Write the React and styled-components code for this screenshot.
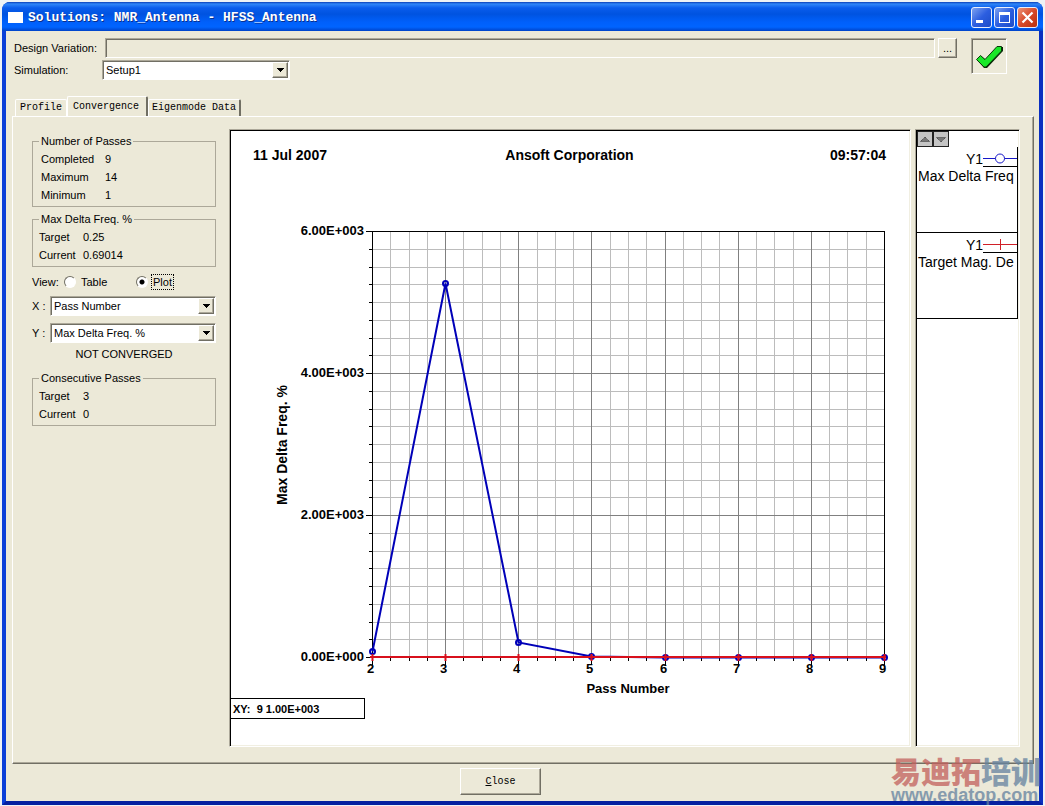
import React, { useState } from "react";
import styled, { createGlobalStyle, css } from "styled-components";

const FACE = "#ece9d8";
const SHADOW = "#716f64";
const SOFT = "#aca899";

const GlobalStyle = createGlobalStyle`
  *, *::before, *::after { box-sizing: border-box; }
  body {
    margin: 0;
    background: #eef2f5;
    color: #000;
    font: 11px/14px "Liberation Sans", Arial, sans-serif;
  }
  button, input, select { font: inherit; color: inherit; margin: 0; }
`;

const raised = css`
  border: 1px solid;
  border-color: #fff ${SHADOW} ${SHADOW} #fff;
  box-shadow: inset -1px -1px 0 ${SOFT};
  background: ${FACE};
`;

const sunken = css`
  padding: 1px;
  border: 1px solid;
  border-color: ${SOFT} #fff #fff ${SOFT};
  box-shadow: inset 1px 1px 0 ${SHADOW};
`;

const paneFrame = css`
  padding: 1px;
  border: 1px solid;
  border-color: ${SOFT} #fff #fff ${SOFT};
  box-shadow: inset 1px 1px 0 #000, inset -1px -1px 0 #f1efe2;
  background: #fff;
`;

const Desktop = styled.div`
  display: flex;
  min-height: 100vh;
  padding: 2px 2px 1px;
`;

const Window = styled.div`
  position: relative;
  flex: 1;
  min-width: 0;
  display: flex;
  flex-direction: column;
  border: 4px solid #0831d9;
  border-color: #0a3fd0 #0a2fc0 #0620a0 #0a3fd8;
  border-top: 0;
  border-radius: 8px 8px 0 0;
  background: #0058e6;
`;

const TitleBar = styled.header`
  display: flex;
  align-items: center;
  height: 29px;
  margin: 0 -4px;
  padding: 2px 5px 0 6px;
  border-radius: 8px 8px 0 0;
  background: linear-gradient(#0a3fb8 0, #2f86f8 2px, #0a5cec 6px, #0053e0 12px, #0060fb 20px, #0064ff 25px, #0043c8 29px);
`;

const AppIcon = styled.span`
  width: 15px;
  height: 11px;
  background: #fff;
  margin-right: 5px;
`;

const Title = styled.h1`
  flex: 1;
  margin: 0;
  color: #fff;
  font: bold 13px/18px "Liberation Mono", monospace;
  text-shadow: 1px 1px 0 #0a2f8c;
`;

const Captions = styled.div`
  display: flex;
  gap: 2px;
`;

const CaptionButton = styled.button`
  width: 21px;
  height: 21px;
  padding: 0;
  border: 1px solid #e8eefc;
  border-radius: 3px;
  background: ${(p) =>
    p.$danger
      ? "linear-gradient(135deg, #ec9478, #d8492a 50%, #b8300c)"
      : "linear-gradient(135deg, #7ea2f0, #2c5ee0 50%, #1c4cc8)"};

  svg { display: block; }
`;

const Client = styled.main`
  flex: 1;
  display: flex;
  flex-direction: column;
  background: ${FACE};
`;

const TopForm = styled.div`
  display: flex;
  align-items: flex-start;
  gap: 14px;
  padding: 7px 32px 0 8px;
`;

const FormRows = styled.div`
  flex: 1;
  display: flex;
  flex-direction: column;
  gap: 2px;
`;

const FormRow = styled.div`
  display: flex;
  align-items: center;
  height: 20px;

  label { width: 88px; }
`;

const VariationInput = styled.input`
  ${sunken}
  flex: 1;
  min-width: 0;
  height: 20px;
  margin: 0 3px;
  background: ${FACE};
`;

const BrowseButton = styled.button`
  ${raised}
  width: 19px;
  height: 20px;
  padding: 0;
`;

const ApplyButton = styled.button`
  ${sunken}
  width: 36px;
  height: 36px;
  background: ${FACE};

  svg { display: block; }
`;

const SelectBox = styled.span`
  ${sunken}
  display: grid;
  grid-template-columns: 1fr 16px;
  width: ${(p) => p.$width};
  height: 20px;
  background: #fff;
`;

const NativeSelect = styled.select`
  grid-area: 1 / 1 / 2 / 3;
  appearance: none;
  min-width: 0;
  border: 0;
  padding: 0 18px 0 2px;
  background: transparent;
  outline: 0;
`;

const DropArrow = styled.span`
  ${raised}
  grid-area: 1 / 2 / 2 / 3;
  display: grid;
  place-items: center;
  pointer-events: none;
`;

const TabList = styled.div`
  display: flex;
  align-items: flex-end;
  height: 20px;
  margin: 16px 0 0 9px;
`;

const Tab = styled.button`
  height: ${(p) => (p.$active ? 20 : 17)}px;
  padding: ${(p) => (p.$active ? "0 7px 0 5px" : p.$plain ? "0 4px" : "0 3px")};
  border: 1px solid #fff;
  border-right-color: ${(p) => (p.$plain ? "#fff" : SHADOW)};
  border-right-width: ${(p) => (p.$plain ? 1 : 2)}px;
  border-bottom: 0;
  border-radius: 2px 2px 0 0;
  background: ${FACE};
  font: 10px/14px "Liberation Mono", monospace;
  white-space: nowrap;
`;

const TabPage = styled.section`
  flex: 1;
  display: flex;
  margin: 0 5px 0 6px;
  padding: 12px 13px 16px 19px;
  border: 1px solid;
  border-color: #fff ${SHADOW} ${SHADOW} #fff;
  box-shadow: inset -1px -1px 0 ${SOFT};
`;

const Sidebar = styled.div`
  width: 184px;
  flex: none;
  margin-right: 13px;
  padding-top: 5px;
`;

const Group = styled.fieldset`
  margin: 0 0 ${(p) => p.$after || 0}px;
  padding: 2px 6px;
  border: 1px solid ${SOFT};

  legend { padding: 0 2px; height: 14px; }
  dl { margin: 0; }
`;

const Fact = styled.div`
  display: grid;
  grid-template-columns: ${(p) => (p.$wide ? 64 : 44)}px 1fr;
  align-items: center;
  height: 18px;
  padding-left: ${(p) => (p.$wide ? 2 : 0)}px;

  dd { margin: 0; }
`;

const ViewRow = styled.div`
  display: flex;
  align-items: center;
  height: 18px;
  margin-bottom: 4px;
`;

const ViewCaption = styled.span`
  width: 32px;
`;

const RadioLabel = styled.label`
  display: flex;
  align-items: center;
  gap: 4px;
  width: 72px;

  span { padding: 0 1px; outline: ${(p) => (p.$focus ? "1px dotted #000" : "0")}; }
`;

const Radio = styled.input`
  appearance: none;
  width: 12px;
  height: 12px;
  border: 1px solid;
  border-color: ${SHADOW} #fff #fff ${SHADOW};
  border-radius: 50%;
  background: #fff;

  &:checked { background: radial-gradient(circle, #000 2px, #fff 3px); }
`;

const AxisRow = styled.label`
  display: flex;
  align-items: center;
  height: 21px;
  margin-bottom: 6px;

  > span:first-child { width: 18px; }
`;

const Status = styled.p`
  margin: -2px 0 10px;
  text-align: center;
`;

const PlotPane = styled.div`
  ${paneFrame}
  flex: 1;
  min-width: 0;
  display: flex;
  flex-direction: column;
  align-items: flex-start;
  margin-right: 4px;
`;

const PlotHeader = styled.div`
  display: grid;
  grid-template-columns: 1fr auto 1fr;
  align-items: center;
  align-self: stretch;
  height: 40px;
  padding: 8px 23px 0 22px;
  font: bold 14px/16px "Liberation Sans", Arial, sans-serif;

  span:last-child { text-align: right; }
`;

const Chart = styled.svg`
  display: block;
  width: 100%;
  height: auto;
  font: bold 13px "Liberation Sans", Arial, sans-serif;
`;

const Readout = styled.output`
  width: 135px;
  height: 21px;
  padding: 3px 2px;
  border: 1px solid #000;
  margin-left: -1px;
  font-weight: bold;
  white-space: pre;
`;

const LegendPane = styled.aside`
  ${paneFrame}
  width: 105px;
  flex: none;
`;

const LegendScroll = styled.div`
  display: flex;
  height: 16px;
`;

const ScrollButton = styled.button`
  width: 16px;
  height: 16px;
  padding: 0;
  border: 1px solid #222;
  background: #c4c4c4;

  svg { display: block; }
`;

const LegendEntry = styled.div`
  height: 86px;
  border: solid #000;
  border-width: 0 1px 1px 0;
  font-size: 14px;
  line-height: 18px;
  white-space: nowrap;
  overflow: hidden;
`;

const LegendKey = styled.div`
  display: flex;
  justify-content: flex-end;
  height: 20px;
  line-height: 24px;

  svg { border-bottom: 1px solid #000; }
`;

const LegendName = styled.div`
  padding-left: 1px;
`;

const Footer = styled.footer`
  display: flex;
  justify-content: center;
  padding: 4px 44px 6px 0;
`;

const CloseButton = styled.button`
  ${raised}
  width: 81px;
  height: 27px;
  padding: 0;
  font: 10px/14px "Liberation Mono", monospace;
`;

const Watermark = styled.div`
  position: absolute;
  right: -5px;
  bottom: -3px;
  width: 153px;
  opacity: 0.75;
  color: #64829f;
  pointer-events: none;
  white-space: nowrap;
`;

const WatermarkName = styled.div`
  font: 900 30px/32px "Noto Sans CJK SC", sans-serif;

  em { font-style: normal; color: #c2605c; }
`;

const WatermarkSite = styled.div`
  font: bold 18px/18px "Liberation Sans", Arial, sans-serif;
`;

function Dropdown({ id, label, options, width }) {
  return (
    <SelectBox $width={width}>
      <NativeSelect id={id} aria-label={label}>
        {options.map((o) => <option key={o}>{o}</option>)}
      </NativeSelect>
      <DropArrow>
        <svg width="7" height="4" shapeRendering="crispEdges"><path d="M0 0h7v1h-1v1h-1v1h-1v1h-1v-1h-1v-1h-1v-1h-1z" /></svg>
      </DropArrow>
    </SelectBox>
  );
}

function FactGroup({ title, facts, wide, after }) {
  return (
    <Group $after={after}>
      <legend>{title}</legend>
      <dl>
        {facts.map(([name, value]) => (
          <Fact key={name} $wide={wide}><dt>{name}</dt><dd>{value}</dd></Fact>
        ))}
      </dl>
    </Group>
  );
}

const LEFT = 141, RIGHT = 653, TOP = 60, BOTTOM = 486;
const passX = (n) => Math.round(LEFT + ((n - 2) * (RIGHT - LEFT)) / 7) + 0.5;
const valueY = (v) => Math.round(BOTTOM - (v * (BOTTOM - TOP)) / 6000) + 0.5;
const deltas = [[2, 90], [3, 5270], [4, 205], [5, 8], [6, 3], [7, 2], [8, 1], [9, 1]];

function ConvergenceChart() {
  const columns = Array.from({ length: 29 }, (_, i) => i);
  const rows = Array.from({ length: 25 }, (_, i) => i);
  const passes = [2, 3, 4, 5, 6, 7, 8, 9];
  return (
    <Chart viewBox="0 0 678 527" role="img" aria-label="Max Delta Freq. % by Pass Number">
      <g shapeRendering="crispEdges" fill="none">
        {columns.filter((i) => i % 4).map((i) => (
          <path key={i} stroke="#bcbcbc" d={`M${passX(2 + i / 4)} ${TOP}V${BOTTOM}`} />
        ))}
        {rows.filter((i) => i % 8).map((i) => (
          <path key={i} stroke="#bcbcbc" d={`M${LEFT} ${valueY(i * 250)}H${RIGHT}`} />
        ))}
        {columns.filter((i) => i % 4 === 0).map((i) => (
          <path key={i} stroke="#808080" d={`M${passX(2 + i / 4)} ${TOP}V${BOTTOM}`} />
        ))}
        {rows.filter((i) => i % 8 === 0).map((i) => (
          <path key={i} stroke="#808080" d={`M${LEFT} ${valueY(i * 250)}H${RIGHT}`} />
        ))}
        <path stroke="#000" d={`M${LEFT + 0.5} ${BOTTOM}V${TOP + 0.5}H${RIGHT + 0.5}V${BOTTOM}`} />
        {columns.map((i) => (
          <path key={i} stroke="#000" d={`M${passX(2 + i / 4)} ${BOTTOM}v${i % 4 ? 4 : 8}`} />
        ))}
        {rows.map((i) => (
          <path key={i} stroke="#000" d={`M${LEFT} ${valueY(i * 250)}h${i % 8 ? -3 : -6}`} />
        ))}
      </g>
      <g stroke="#0000b8" strokeWidth="2" fill="none">
        <polyline points={deltas.map(([n, v]) => `${passX(n)},${valueY(v)}`).join(" ")} />
        {deltas.map(([n, v]) => <circle key={n} cx={passX(n)} cy={valueY(v)} r="2.5" />)}
      </g>
      <g stroke="#d8101c" strokeWidth="2">
        <path d={`M${LEFT - 2} ${BOTTOM}H${RIGHT + 2}`} />
        {passes.map((n) => <path key={n} d={`M${passX(n)} ${BOTTOM - 3}v7`} />)}
      </g>
      {[0, 2000, 4000, 6000].map((v) => (
        <text key={v} x="133" y={valueY(v) + 3} textAnchor="end">{`${(v / 1000).toFixed(2)}E+00${v ? 3 : 0}`}</text>
      ))}
      {passes.map((n) => (
        <text key={n} x={passX(n) - 2} y="502" textAnchor="middle">{n}</text>
      ))}
      <text x="397" y="522" textAnchor="middle">Pass Number</text>
      <text transform="translate(56 274) rotate(-90)" textAnchor="middle" fontSize="14">Max Delta Freq. %</text>
    </Chart>
  );
}

export default function App() {
  const [view, setView] = useState("Plot");
  return (
    <Desktop>
      <GlobalStyle />
      <Window>
        <TitleBar>
          <AppIcon />
          <Title>Solutions: NMR_Antenna - HFSS_Antenna</Title>
          <Captions>
            <CaptionButton aria-label="Minimize">
              <svg width="19" height="19"><path fill="#fff" d="M4 12h7v3H4z" /></svg>
            </CaptionButton>
            <CaptionButton aria-label="Maximize">
              <svg width="19" height="19"><path fill="#fff" fillRule="evenodd" d="M4 4h11v11H4zM5 7v7h9V7z" /></svg>
            </CaptionButton>
            <CaptionButton aria-label="Close window" $danger>
              <svg width="19" height="19"><path stroke="#fff" strokeWidth="2.2" d="M4.5 4.5l10 10M14.5 4.5l-10 10" /></svg>
            </CaptionButton>
          </Captions>
        </TitleBar>
        <Client>
          <TopForm>
            <FormRows>
              <FormRow>
                <label htmlFor="variation">Design Variation:</label>
                <VariationInput id="variation" readOnly />
                <BrowseButton aria-label="Browse variations">...</BrowseButton>
              </FormRow>
              <FormRow>
                <label htmlFor="simulation">Simulation:</label>
                <Dropdown id="simulation" options={["Setup1"]} width="188px" />
              </FormRow>
            </FormRows>
            <ApplyButton aria-label="Apply">
              <svg width="32" height="32">
                <path fill="#082808" d="M4 20l4-4 5 4L25 7h5v4L14 28h-3z" />
                <path fill="#18e828" stroke="#083808" d="M3.500 19.500l4-4 4.500 4L24 6.500h4.500v4.500L13 27h-2z" />
              </svg>
            </ApplyButton>
          </TopForm>
          <TabList role="tablist">
            <Tab role="tab" $plain>Profile</Tab>
            <Tab role="tab" aria-selected="true" $active>Convergence</Tab>
            <Tab role="tab">Eigenmode Data</Tab>
          </TabList>
          <TabPage>
            <Sidebar>
              <FactGroup title="Number of Passes" wide after={5} facts={[["Completed", "9"], ["Maximum", "14"], ["Minimum", "1"]]} />
              <FactGroup title="Max Delta Freq. %" after={6} facts={[["Target", "0.25"], ["Current", "0.69014"]]} />
              <ViewRow role="radiogroup" aria-label="View">
                <ViewCaption>View:</ViewCaption>
                {["Table", "Plot"].map((name) => (
                  <RadioLabel key={name} $focus={view === name}>
                    <Radio type="radio" name="view" checked={view === name} onChange={() => setView(name)} />
                    <span>{name}</span>
                  </RadioLabel>
                ))}
              </ViewRow>
              <AxisRow><span>X :</span><Dropdown label="X axis" options={["Pass Number"]} width="166px" /></AxisRow>
              <AxisRow><span>Y :</span><Dropdown label="Y axis" options={["Max Delta Freq. %"]} width="166px" /></AxisRow>
              <Status>NOT CONVERGED</Status>
              <FactGroup title="Consecutive Passes" facts={[["Target", "3"], ["Current", "0"]]} />
            </Sidebar>
            <PlotPane>
              <PlotHeader>
                <span>11 Jul 2007</span>
                <span>Ansoft Corporation</span>
                <span>09:57:04</span>
              </PlotHeader>
              <ConvergenceChart />
              <Readout>{"XY:  9 1.00E+003"}</Readout>
            </PlotPane>
            <LegendPane>
              <LegendScroll>
                <ScrollButton aria-label="Scroll up">
                  <svg width="14" height="14"><path fill="#777" stroke="#333" strokeDasharray="1 1" d="M2.500 9.500h9L7 5z" /></svg>
                </ScrollButton>
                <ScrollButton aria-label="Scroll down">
                  <svg width="14" height="14"><path fill="#777" stroke="#333" strokeDasharray="1 1" d="M2.500 5.500h9L7 10z" /></svg>
                </ScrollButton>
              </LegendScroll>
              <LegendEntry>
                <LegendKey>
                  Y1
                  <svg width="34" height="20" fill="#fff" stroke="#1818c8"><path d="M0 11.500h34" /><circle cx="17" cy="11.500" r="4.500" /></svg>
                </LegendKey>
                <LegendName>Max Delta Freq</LegendName>
              </LegendEntry>
              <LegendEntry>
                <LegendKey>
                  Y1
                  <svg width="34" height="20" stroke="#d02028"><path d="M0 11.500h34M17.500 6v11" /></svg>
                </LegendKey>
                <LegendName>Target Mag. De</LegendName>
              </LegendEntry>
            </LegendPane>
          </TabPage>
          <Footer>
            <CloseButton><u>C</u>lose</CloseButton>
          </Footer>
        </Client>
        <Watermark>
          <WatermarkName><em>易迪拓</em>培训</WatermarkName>
          <WatermarkSite>www.edatop.com</WatermarkSite>
        </Watermark>
      </Window>
    </Desktop>
  );
}
